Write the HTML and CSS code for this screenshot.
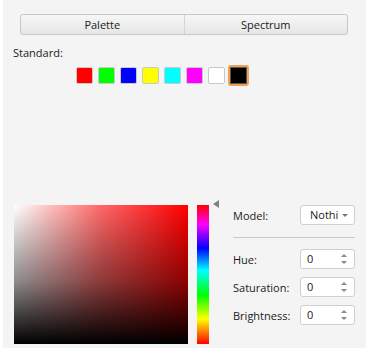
FILE: index.html
```html
<!DOCTYPE html>
<html lang="en">
<head>
  <meta charset="UTF-8" />
  <title>Color Picker</title>
  <link rel="stylesheet" href="styles.css">
</head>
<body>
  <div class="panel">
    <div class="tabs">
      <button class="tab">Palette</button>
      <button class="tab">Spectrum</button>
    </div>

    <div class="std-label">Standard:</div>
    <div class="swatches">
      <span class="swatch red"></span>
      <span class="swatch green"></span>
      <span class="swatch blue"></span>
      <span class="swatch yellow"></span>
      <span class="swatch cyan"></span>
      <span class="swatch magenta"></span>
      <span class="swatch white"></span>
      <span class="swatch black selected"></span>
    </div>

    <div class="spectrum">
      <div class="sv-square"></div>
      <div class="hue-bar"></div>
      <div class="hue-marker"></div>

      <div class="fields">
        <div class="field-row">
          <label>Model:</label>
          <div class="select">Nothi<span class="caret"></span></div>
        </div>
        <div class="separator"></div>
        <div class="field-row">
          <label>Hue:</label>
          <div class="spin">0<span class="arrows"><i class="up"></i><i class="down"></i></span></div>
        </div>
        <div class="field-row">
          <label>Saturation:</label>
          <div class="spin">0<span class="arrows"><i class="up"></i><i class="down"></i></span></div>
        </div>
        <div class="field-row">
          <label>Brightness:</label>
          <div class="spin">0<span class="arrows"><i class="up"></i><i class="down"></i></span></div>
        </div>
      </div>
    </div>
  </div>
</body>
</html>
```

FILE: styles.css
```css
* {
  box-sizing: border-box;
}

body {
  margin: 0;
  background: #fff;
  font-family: "Open Sans", "DejaVu Sans", sans-serif;
  font-size: 11px;
  color: #1a1a22;
}

.panel {
  margin-left: 3px;
  width: 363px;
  height: 348px;
  background: #f4f4f4;
  padding: 14px 0 4px 10px;
  display: flex;
  flex-direction: column;
}

.tabs {
  margin-left: 7px;
  width: 328px;
  height: 21px;
  display: flex;
  border: 1px solid #c8c8c8;
  border-radius: 3px;
  background: linear-gradient(#f6f6f6, #e6e6e6);
  overflow: hidden;
}

.tab {
  flex: 1;
  border: 0;
  background: transparent;
  font: inherit;
  color: inherit;
  padding: 0;
  line-height: 19px;
}

.tab + .tab {
  border-left: 1px solid #d4d4d4;
}

.std-label {
  margin-top: 10px;
  line-height: 16px;
}

.swatches {
  margin: 6px 0 0 63px;
  display: flex;
  gap: 5px;
}

.swatch {
  width: 17px;
  height: 17px;
  border: 1px solid #c8c8c8;
  border-radius: 2px;
}

.red { background: #f00; }
.green { background: #0f0; }
.blue { background: #00f; }
.yellow { background: #ff0; }
.cyan { background: #0ff; }
.magenta { background: #f0f; }
.white { background: #fff; }
.black { background: #000; }

.swatch.selected {
  border: 2px solid #f0a050;
  border-radius: 3px;
  width: 21px;
  height: 21px;
  margin: -2px -2px 0 -2px;
  box-shadow: inset 0 0 0 1px #555;
}

.spectrum {
  margin-top: auto;
  margin-left: 1px;
  display: flex;
  align-items: flex-start;
}

/* saturation left to right, brightness top to bottom */
.sv-square {
  width: 174px;
  height: 139px;
  background:
    linear-gradient(to top, #000, rgba(0, 0, 0, 0.45) 45%, rgba(0, 0, 0, 0)),
    linear-gradient(to right, #fff, #ff6868 50%, #f00);
}

.hue-bar {
  margin-left: 9px;
  width: 12px;
  height: 139px;
  background: linear-gradient(#f00, #f0f 14%, #00f 31%, #0ff 47%, #0f0 65%, #ff0 82%, #f00);
}

.hue-marker {
  margin: -5px 0 0 4px;
  width: 0;
  height: 0;
  border-top: 4.5px solid transparent;
  border-bottom: 4.5px solid transparent;
  border-right: 6px solid #808080;
}

.fields {
  margin-left: 14px;
  width: 122px;
}

.field-row {
  height: 20px;
  display: flex;
  align-items: center;
  justify-content: space-between;
  margin-bottom: 8px;
}

.separator {
  height: 1px;
  background: #c8c8c8;
  margin: 12px 0 11px;
}

.select,
.spin {
  position: relative;
  width: 55px;
  height: 20px;
  background: #fff;
  border: 1px solid #d0d0d0;
  border-radius: 3px;
  line-height: 18px;
  padding-left: 6px;
}

.select {
  padding-left: 9px;
}

.caret {
  position: absolute;
  right: 6px;
  top: 8px;
  border-left: 3px solid transparent;
  border-right: 3px solid transparent;
  border-top: 3px solid #777;
}

.arrows i {
  position: absolute;
  right: 7px;
  border-left: 3px solid transparent;
  border-right: 3px solid transparent;
}

.arrows .up {
  top: 4px;
  border-bottom: 3px solid #888;
}

.arrows .down {
  top: 11px;
  border-top: 3px solid #888;
}
```
